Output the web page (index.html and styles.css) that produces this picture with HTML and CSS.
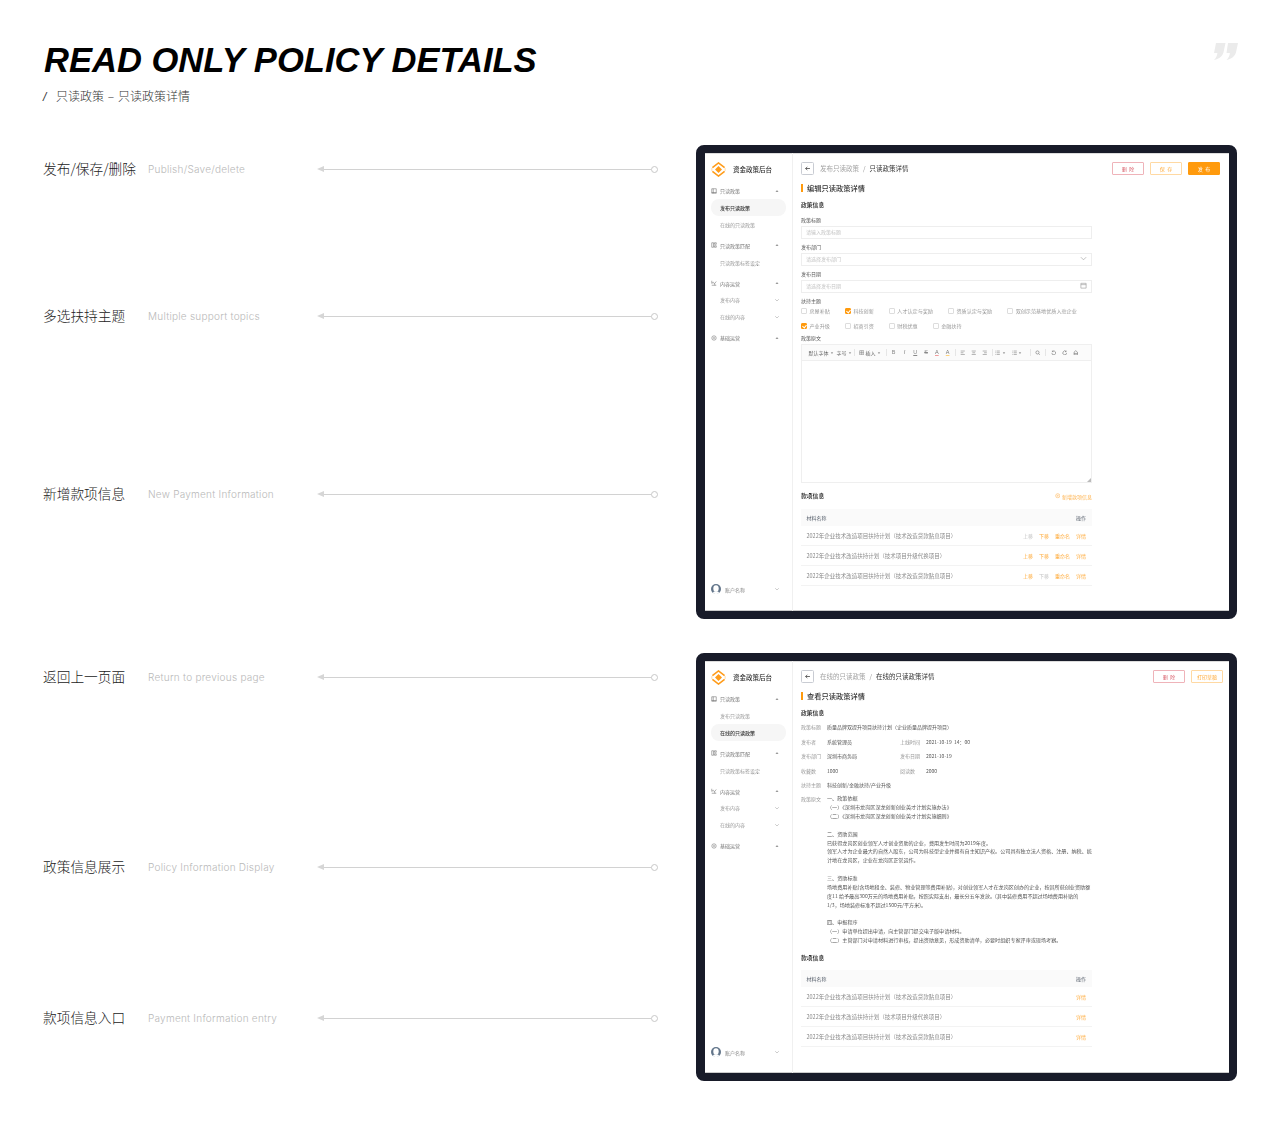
FILE: index.html
```html
<!DOCTYPE html>
<html lang="zh-CN">
<head>
<meta charset="utf-8">
<title>Read only policy details</title>
<link rel="stylesheet" href="styles.css">
</head>
<body>
<svg class="defs" aria-hidden="true">
  <symbol id="logo" viewBox="0 0 16 16">
    <path d="M1.500 6 8 1l6.500 5M1.500 10 8 15l6.500-5" fill="none" stroke="#ff9c1a" stroke-width="1.700"/>
    <path d="M.9 6.500v3M15.100 6.500v3" fill="none" stroke="#ffd9a3" stroke-width="1"/>
    <path d="M8 4.300 11.700 8 8 11.700 4.300 8z" fill="#ff9c1a"/>
  </symbol>
  <symbol id="avatar" viewBox="0 0 10 10">
    <circle cx="5" cy="5" r="5" fill="#62758a"/>
    <ellipse cx="5" cy="4.600" rx="2.700" ry="3.300" fill="#fff"/>
    <path d="M1.500 9.200 3 7.600h4l1.500 1.600L5 10.200z" fill="#fff"/>
  </symbol>
  <symbol id="i-book" viewBox="0 0 8 8"><path d="M1 1h6v6H1zM3 1v6M1 6h6" fill="none" stroke="#777" stroke-width=".8"/></symbol>
  <symbol id="i-grid" viewBox="0 0 8 8"><path d="M1 1h2.400v6H1zM4.600 1H7v2H4.600zM4.600 5H7v2H4.600z" fill="none" stroke="#777" stroke-width=".8"/></symbol>
  <symbol id="i-edit" viewBox="0 0 8 8"><path d="M1 1v3.500L3 3l1.500 2L7 2M1 7h6M5 7V5" fill="none" stroke="#777" stroke-width=".8"/></symbol>
  <symbol id="i-gear" viewBox="0 0 8 8"><circle cx="4" cy="4" r="2.900" fill="none" stroke="#777" stroke-width=".8"/><circle cx="4" cy="4" r="1" fill="#777"/></symbol>
  <symbol id="i-up" viewBox="0 0 6 6"><path d="M1.500 3.800 3 2.200l1.500 1.600z" fill="#777"/></symbol>
  <symbol id="i-down" viewBox="0 0 6 6"><path d="M1.200 2.200 3 4l1.800-1.800" fill="none" stroke="#aaa" stroke-width=".6"/></symbol>
  <symbol id="i-caret" viewBox="0 0 4 4"><path d="M.8 1.400h2.400L2 2.800z" fill="#666"/></symbol>
  <symbol id="i-back" viewBox="0 0 8 8"><path d="M6.800 4H1.800M3.800 2.200 1.800 4l2 1.800" fill="none" stroke="#444" stroke-width=".9"/></symbol>
  <symbol id="i-chev" viewBox="0 0 8 8"><path d="M1 2.500 4 5.500l3-3" fill="none" stroke="#999" stroke-width=".7"/></symbol>
  <symbol id="i-cal" viewBox="0 0 8 8"><path d="M1 1.500h6V7H1zM1 3h6" fill="none" stroke="#999" stroke-width=".7"/></symbol>
  <symbol id="i-table" viewBox="0 0 8 8"><path d="M1 1h6v6H1zM1 4h6M4 1v6" fill="none" stroke="#666" stroke-width=".7"/></symbol>
  <symbol id="i-left" viewBox="0 0 8 8"><path d="M1 1.500h6M1 4h4M1 6.500h6" fill="none" stroke="#666" stroke-width=".7"/></symbol>
  <symbol id="i-center" viewBox="0 0 8 8"><path d="M1 1.500h6M2 4h4M1 6.500h6" fill="none" stroke="#666" stroke-width=".7"/></symbol>
  <symbol id="i-right" viewBox="0 0 8 8"><path d="M1 1.500h6M3 4h4M1 6.500h6" fill="none" stroke="#666" stroke-width=".7"/></symbol>
  <symbol id="i-list" viewBox="0 0 8 8"><path d="M2.500 1.500H7M2.500 4H7M2.500 6.500H7M1 1v1M1 3.500v1M1 6v1" fill="none" stroke="#666" stroke-width=".7"/></symbol>
  <symbol id="i-search" viewBox="0 0 8 8"><circle cx="3.600" cy="3.600" r="2.300" fill="none" stroke="#666" stroke-width=".8"/><path d="M5.300 5.300 7 7" stroke="#666" stroke-width=".8"/></symbol>
  <symbol id="i-undo" viewBox="0 0 8 8"><path d="M2 2.200a2.800 2.800 0 1 1-.8 2M2 .8v1.600h1.600" fill="none" stroke="#666" stroke-width=".8"/></symbol>
  <symbol id="i-redo" viewBox="0 0 8 8"><path d="M6 2.200a2.800 2.800 0 1 0 .8 2M6 .8v1.600H4.400" fill="none" stroke="#666" stroke-width=".8"/></symbol>
  <symbol id="i-trash" viewBox="0 0 8 8"><path d="M1.500 7V3.200L4 1l2.500 2.200V7zM1.500 5h5" fill="none" stroke="#666" stroke-width=".8"/></symbol>
  <symbol id="i-plus" viewBox="0 0 8 8"><circle cx="4" cy="4" r="3" fill="none" stroke="#ffb24d" stroke-width=".8"/><path d="M2.500 4h3M4 2.500v3" stroke="#ffb24d" stroke-width=".6"/></symbol>
</svg>

<div class="page">
  <header class="hero">
    <div>
      <h1 class="hero-title">READ ONLY POLICY DETAILS</h1>
      <p class="crumbs"><span class="crumbs-slash">/</span>只读政策<span class="crumbs-dash">–</span>只读政策详情</p>
    </div>
    <svg class="quote" viewBox="0 0 25 17" aria-hidden="true">
      <path d="M3 0h9.500l-1.800 8.500C10 12.500 6.500 16 1 17c2-2 3.200-4.200 3.400-7H1zM15 0h10l-1.800 8.500c-.8 4-4.200 7.500-9.700 8.500 2-2 3.200-4.200 3.400-7h-3.400z" fill="#ebebeb"/>
    </svg>
  </header>

  <div class="board">
    <div class="notes">
      <div class="note"><span class="note-cn">发布/保存/删除</span><span class="note-en">Publish/Save/delete</span><span class="link"><i class="link-arrow"></i><i class="link-line"></i><i class="link-dot"></i></span></div>
      <div class="note"><span class="note-cn">多选扶持主题</span><span class="note-en">Multiple support topics</span><span class="link"><i class="link-arrow"></i><i class="link-line"></i><i class="link-dot"></i></span></div>
      <div class="note"><span class="note-cn">新增款项信息</span><span class="note-en">New Payment Information</span><span class="link"><i class="link-arrow"></i><i class="link-line"></i><i class="link-dot"></i></span></div>
      <div class="note"><span class="note-cn">返回上一页面</span><span class="note-en">Return to previous page</span><span class="link"><i class="link-arrow"></i><i class="link-line"></i><i class="link-dot"></i></span></div>
      <div class="note"><span class="note-cn">政策信息展示</span><span class="note-en">Policy Information Display</span><span class="link"><i class="link-arrow"></i><i class="link-line"></i><i class="link-dot"></i></span></div>
      <div class="note"><span class="note-cn">款项信息入口</span><span class="note-en">Payment Information entry</span><span class="link"><i class="link-arrow"></i><i class="link-line"></i><i class="link-dot"></i></span></div>
    </div>

    <div class="shots">
      <!-- edit window -->
      <section class="device device-edit">
        <aside class="side">
          <div class="brand"><svg class="brand-logo"><use href="#logo"/></svg><span>资金政策后台</span></div>
          <nav class="nav">
            <div class="nav-head"><svg class="nav-ico"><use href="#i-book"/></svg><span>只读政策</span><svg class="nav-caret"><use href="#i-up"/></svg></div>
            <div class="nav-item nav-item-on">发布只读政策</div>
            <div class="nav-item">在线的只读政策</div>
            <div class="nav-head nav-gap"><svg class="nav-ico"><use href="#i-grid"/></svg><span>只读政策匹配</span><svg class="nav-caret"><use href="#i-up"/></svg></div>
            <div class="nav-item">只读政策标签设定</div>
            <div class="nav-head nav-gap"><svg class="nav-ico"><use href="#i-edit"/></svg><span>内容运营</span><svg class="nav-caret"><use href="#i-up"/></svg></div>
            <div class="nav-item">发布内容<svg class="nav-caret"><use href="#i-down"/></svg></div>
            <div class="nav-item">在线的内容<svg class="nav-caret"><use href="#i-down"/></svg></div>
            <div class="nav-head nav-gap"><svg class="nav-ico"><use href="#i-gear"/></svg><span>基础运营</span><svg class="nav-caret"><use href="#i-up"/></svg></div>
          </nav>
          <div class="account"><svg class="avatar"><use href="#avatar"/></svg><span>账户名称</span><svg class="nav-caret"><use href="#i-down"/></svg></div>
        </aside>
        <main class="main">
          <div class="topbar topbar-edit">
            <div class="path"><span class="back"><svg class="back-ico"><use href="#i-back"/></svg></span><span class="path-dim">发布只读政策</span><span class="path-sep">/</span><span class="path-now">只读政策详情</span></div>
            <div class="actions"><span class="btn btn-red">删 除</span><span class="btn btn-line">保 存</span><span class="btn btn-fill">发 布</span></div>
          </div>
          <h2 class="heading">编辑只读政策详情</h2>
          <h3 class="section">政策信息</h3>
          <div class="form">
            <div class="field"><div class="label">政策标题</div><div class="input">请输入政策标题</div></div>
            <div class="field"><div class="label">发布部门</div><div class="input">请选择发布部门<svg class="input-ico"><use href="#i-chev"/></svg></div></div>
            <div class="field"><div class="label">发布日期</div><div class="input">请选择发布日期<svg class="input-ico"><use href="#i-cal"/></svg></div></div>
            <div class="label">扶持主题</div>
            <div class="checks">
              <span class="check"><i class="box"></i>房屋补贴</span>
              <span class="check"><i class="box box-on"></i>科技创新</span>
              <span class="check"><i class="box"></i>人才认定与奖励</span>
              <span class="check"><i class="box"></i>资质认定与奖励</span>
              <span class="check"><i class="box"></i>双创示范基地优质入驻企业</span>
            </div>
            <div class="checks checks-2">
              <span class="check"><i class="box box-on"></i>产业升级</span>
              <span class="check"><i class="box"></i>招商引资</span>
              <span class="check"><i class="box"></i>财税优惠</span>
              <span class="check"><i class="box"></i>金融扶持</span>
            </div>
            <div class="label label-editor">政策原文</div>
            <div class="editor">
              <div class="toolbar">
                <span class="tool tool-font">默认字体<svg class="tool-caret"><use href="#i-caret"/></svg></span>
                <span class="tool tool-size">字号<svg class="tool-caret"><use href="#i-caret"/></svg></span>
                <i class="tool-div"></i>
                <span class="tool tool-insert"><svg class="tool-ico"><use href="#i-table"/></svg>插入<svg class="tool-caret"><use href="#i-caret"/></svg></span>
                <i class="tool-div"></i>
                <span class="fmt">B</span><span class="fmt fmt-i">I</span><span class="fmt fmt-u">U</span><span class="fmt fmt-s">S</span><span class="fmt fmt-red">A</span><span class="fmt fmt-yel">A</span>
                <i class="tool-div"></i>
                <svg class="tool-ico tool-cell"><use href="#i-left"/></svg><svg class="tool-ico tool-cell"><use href="#i-center"/></svg><svg class="tool-ico tool-cell"><use href="#i-right"/></svg>
                <i class="tool-div"></i>
                <span class="tool tool-list"><svg class="tool-ico"><use href="#i-list"/></svg><svg class="tool-caret"><use href="#i-caret"/></svg></span>
                <span class="tool tool-list"><svg class="tool-ico"><use href="#i-list"/></svg><svg class="tool-caret"><use href="#i-caret"/></svg></span>
                <i class="tool-div"></i>
                <svg class="tool-ico tool-cell"><use href="#i-search"/></svg>
                <i class="tool-div"></i>
                <svg class="tool-ico tool-cell"><use href="#i-undo"/></svg><svg class="tool-ico tool-cell"><use href="#i-redo"/></svg><svg class="tool-ico tool-cell"><use href="#i-trash"/></svg>
              </div>
              <div class="editor-body"><i class="grip"></i></div>
            </div>
            <div class="section-row"><h3 class="section section-flat">款项信息</h3><span class="add"><svg class="add-ico"><use href="#i-plus"/></svg>新增款项信息</span></div>
            <div class="table">
              <div class="thead"><span>材料名称</span><span>操作</span></div>
              <div class="trow"><span class="trow-name">2022年企业技术改造项目扶持计划（技术改造贷款贴息项目）</span><span class="ops"><a class="op op-off">上移</a><a class="op">下移</a><a class="op">重命名</a><a class="op">详情</a></span></div>
              <div class="trow"><span class="trow-name">2022年企业技术改造扶持计划（技术项目升级代换项目）</span><span class="ops"><a class="op">上移</a><a class="op">下移</a><a class="op">重命名</a><a class="op">详情</a></span></div>
              <div class="trow"><span class="trow-name">2022年企业技术改造项目扶持计划（技术改造贷款贴息项目）</span><span class="ops"><a class="op">上移</a><a class="op op-off">下移</a><a class="op">重命名</a><a class="op">详情</a></span></div>
            </div>
          </div>
        </main>
      </section>

      <!-- view window -->
      <section class="device device-view">
        <aside class="side">
          <div class="brand"><svg class="brand-logo"><use href="#logo"/></svg><span>资金政策后台</span></div>
          <nav class="nav">
            <div class="nav-head"><svg class="nav-ico"><use href="#i-book"/></svg><span>只读政策</span><svg class="nav-caret"><use href="#i-up"/></svg></div>
            <div class="nav-item">发布只读政策</div>
            <div class="nav-item nav-item-on">在线的只读政策</div>
            <div class="nav-head nav-gap"><svg class="nav-ico"><use href="#i-grid"/></svg><span>只读政策匹配</span><svg class="nav-caret"><use href="#i-up"/></svg></div>
            <div class="nav-item">只读政策标签设定</div>
            <div class="nav-head nav-gap"><svg class="nav-ico"><use href="#i-edit"/></svg><span>内容运营</span><svg class="nav-caret"><use href="#i-up"/></svg></div>
            <div class="nav-item">发布内容<svg class="nav-caret"><use href="#i-down"/></svg></div>
            <div class="nav-item">在线的内容<svg class="nav-caret"><use href="#i-down"/></svg></div>
            <div class="nav-head nav-gap"><svg class="nav-ico"><use href="#i-gear"/></svg><span>基础运营</span><svg class="nav-caret"><use href="#i-up"/></svg></div>
          </nav>
          <div class="account"><svg class="avatar"><use href="#avatar"/></svg><span>账户名称</span><svg class="nav-caret"><use href="#i-down"/></svg></div>
        </aside>
        <main class="main">
          <div class="topbar topbar-view">
            <div class="path"><span class="back"><svg class="back-ico"><use href="#i-back"/></svg></span><span class="path-dim">在线的只读政策</span><span class="path-sep">/</span><span class="path-now">在线的只读政策详情</span></div>
            <div class="actions"><span class="btn btn-red">删 除</span><span class="btn btn-line">打印草稿</span></div>
          </div>
          <h2 class="heading">查看只读政策详情</h2>
          <h3 class="section">政策信息</h3>
          <div class="info">
            <div class="info-row"><span class="info-key">政策标题</span><span>质量品牌双提升项目扶持计划（企业质量品牌提升项目）</span></div>
            <div class="info-row"><span class="info-key">发布者</span><span class="info-val">系统管理员</span><span class="info-key">上线时间</span><span>2021-10-19&nbsp;&nbsp;14：00</span></div>
            <div class="info-row"><span class="info-key">发布部门</span><span class="info-val">深圳市商务局</span><span class="info-key">发布日期</span><span>2021-10-19</span></div>
            <div class="info-row"><span class="info-key">收藏数</span><span class="info-val">1000</span><span class="info-key">阅读数</span><span>2000</span></div>
            <div class="info-row"><span class="info-key">扶持主题</span><span>科技创新/金融扶持/产业升级</span></div>
            <div class="info-row info-row-body">
              <span class="info-key">政策原文</span>
              <div class="doc">
                <p>一、政策依据</p>
                <p>（一）《深圳市龙岗区深龙创新创业英才计划实施办法》</p>
                <p class="doc-end">（二）《深圳市龙岗区深龙创新创业英才计划实施细则》</p>
                <p>二、资助范围</p>
                <p>已获得龙岗区创业领军人才创业资助的企业，费用发生时间为2019年度。</p>
                <p>领军人才为企业最大的自然人股东，公司为科技型企业并拥有自主知识产权。公司具有独立法人资格、注册、纳税、统</p>
                <p class="doc-end">计地在龙岗区，企业在龙岗区正常运作。</p>
                <p>三、资助标准</p>
                <p>场地费用补贴(含场地租金、装修、物业管理等费用补贴)，对创业领军人才在龙岗区创办的企业，按其所获创业资助额</p>
                <p>度11 给予最高300万元的场地费用补贴，按照实际支出，最长分五年发放。(其中装修费用不超过场地费用补贴的</p>
                <p class="doc-end">1/3，场地装修标准不超过1500元/平方米)。</p>
                <p>四、申报程序</p>
                <p>（一）申请单位提出申请，向主管部门提交电子版申请材料。</p>
                <p>（二）主管部门对申请材料进行审核，提出资助意见，形成资助清单，必要时组织专家评审或现场考察。</p>
              </div>
            </div>
          </div>
          <div class="section-row section-row-view"><h3 class="section section-flat">款项信息</h3></div>
          <div class="table table-view">
            <div class="thead"><span>材料名称</span><span>操作</span></div>
            <div class="trow"><span class="trow-name">2022年企业技术改造项目扶持计划（技术改造贷款贴息项目）</span><span class="ops"><a class="op">详情</a></span></div>
            <div class="trow"><span class="trow-name">2022年企业技术改造扶持计划（技术项目升级代换项目）</span><span class="ops"><a class="op">详情</a></span></div>
            <div class="trow"><span class="trow-name">2022年企业技术改造项目扶持计划（技术改造贷款贴息项目）</span><span class="ops"><a class="op">详情</a></span></div>
          </div>
        </main>
      </section>
    </div>
  </div>
</div>
</body>
</html>
```

FILE: styles.css
```css
* { box-sizing: border-box; }
html, body { margin: 0; padding: 0; background: #fff; }
body { font-family: "Noto Sans CJK SC", "Liberation Sans", sans-serif; color: #333; }
.defs { position: absolute; width: 0; height: 0; overflow: hidden; }
h1, h2, h3, p { margin: 0; }

.page { width: 1280px; height: 1124px; padding: 0 43px; overflow: hidden; }

/* header */
.hero { display: flex; justify-content: space-between; align-items: flex-start; height: 145px; padding-top: 38px; }
.hero-title { font: italic bold 34.550px/44px "Liberation Sans", Arial, sans-serif; color: #000; margin-left: 1px; white-space: nowrap; }
.crumbs { margin-top: 4px; font-size: 12px; line-height: 20px; font-weight: 300; color: #333; white-space: nowrap; }
.crumbs-slash { display: inline-block; width: 13px; font-family: "Liberation Sans", sans-serif; font-style: italic; }
.crumbs-dash { display: inline-block; width: 14px; text-align: center; }
.quote { width: 25px; height: 17px; margin-top: 5px; margin-right: -1px; }

/* board */
.board { display: flex; justify-content: space-between; align-items: flex-start; }
.notes { width: 615px; padding-top: 13px; display: grid; grid-template-rows: 147px 178px 183px 190px 151px 20px; }
.note { display: grid; grid-template-columns: 105px 169px 341px; align-items: center; height: 20px; white-space: nowrap; }
.note-cn { font-size: 13.700px; line-height: 18px; height: 20px; font-weight: 300; color: #222; }
.note-en { font: 300 10px/22px Inter, "Liberation Sans", sans-serif; letter-spacing: .25px; color: #b9b9b9; }
.link { display: flex; align-items: center; height: 7px; }
.link-arrow { width: 0; height: 0; border: 3.500px solid transparent; border-left: 0; border-right: 7px solid #d6d6d6; }
.link-line { flex: 1; height: 1px; background: #d2d2d2; }
.link-dot { width: 7px; height: 7px; border: 1px solid #c8c8c8; border-radius: 50%; }

/* devices */
.shots { width: 541px; display: flex; flex-direction: column; gap: 34px; }
.device { display: flex; background: #fff; border: 8px solid #181b29; border-left-width: 9px; border-radius: 8px; box-shadow: inset 0 1px 0 #ddd, inset 0 -1px 0 #ccc; overflow: hidden; font-size: 5px; line-height: 7px; filter: blur(.3px); }
.device-edit { height: 474px; }
.device-view { height: 428px; }

/* sidebar */
.side { width: 88px; flex: none; display: flex; flex-direction: column; padding: 8px 6px 17px; border-right: 1px solid #f0f0f0; color: #777; }
.device-view .side { padding-bottom: 16px; }
.brand { display: flex; align-items: center; gap: 7px; height: 16px; font-size: 6.500px; color: #333; font-weight: 500; white-space: nowrap; }
.brand-logo { width: 15px; height: 15px; flex: none; }
.nav { margin-top: 5.500px; }
.nav-head, .nav-item { display: flex; align-items: center; height: 16.700px; white-space: nowrap; }
.nav-head { gap: 3px; }
.nav-gap { margin-top: 4.500px; }
.nav-ico { width: 6px; height: 6px; flex: none; }
.nav-caret { width: 6px; height: 6px; flex: none; margin-left: auto; margin-right: 6px; }
.nav-item { padding-left: 9px; color: #999; }
.nav-item-on { background: #f6f6f6; border-radius: 8px; color: #333; font-weight: 500; }
.account { margin-top: auto; display: flex; align-items: center; gap: 4px; height: 10px; color: #888; white-space: nowrap; }
.avatar { width: 10px; height: 10px; flex: none; }

/* main */
.main { flex: 1; min-width: 0; padding-left: 8px; color: #666; }
.topbar { display: flex; justify-content: space-between; align-items: center; height: 31px; }
.topbar-edit { padding-right: 9px; }
.topbar-view { padding-right: 6px; }
.path { display: flex; align-items: center; font-size: 6.500px; white-space: nowrap; }
.back { display: flex; align-items: center; justify-content: center; width: 13px; height: 13px; border: 1px solid #c9ccd3; border-radius: 1.500px; margin-right: 6px; }
.back-ico { width: 7px; height: 7px; }
.path-dim { color: #a3a3a3; }
.path-sep { margin: 0 4px; color: #999; }
.path-now { color: #333; }
.actions { display: flex; gap: 6px; }
.btn { display: flex; align-items: center; justify-content: center; width: 32px; height: 13.500px; border: 1px solid; border-radius: 1px; white-space: nowrap; }
.btn-red { border-color: #efb3b9; color: #d9606c; word-spacing: 1.500px; }
.btn-line { border-color: #ffd9a3; color: #ffac3d; word-spacing: 1.500px; }
.btn-fill { background: #ff9a0d; border-color: #ff9a0d; color: #fff; word-spacing: 1.500px; }
.heading { height: 8px; border-left: 2px solid #ff9a0d; padding-left: 4px; font-size: 7.250px; line-height: 8px; font-weight: 500; color: #333; white-space: nowrap; }
.section { margin-top: 9px; height: 8px; font-size: 5.800px; line-height: 8px; font-weight: 500; color: #222; white-space: nowrap; }
.section-flat { margin-top: 0; }

/* form */
.form { width: 291px; padding-top: 7.500px; }
.field { margin-bottom: 5px; }
.label { height: 7px; line-height: 6px; color: #555; white-space: nowrap; }
.input { display: flex; align-items: center; justify-content: space-between; height: 12.500px; margin-top: 2.500px; padding: 0 4px 1px; border: 1px solid #eee; color: #c4c4c4; white-space: nowrap; }
.input-ico { width: 7px; height: 7px; }
.checks { display: flex; margin-top: 3px; height: 7px; }
.checks-2 { margin-top: 8px; }
.check { display: flex; align-items: center; min-width: 43.500px; padding-right: 15px; font-size: 5.100px; line-height: 6px; color: #999; white-space: nowrap; }
.box { position: relative; width: 6px; height: 6px; margin-right: 2.500px; border: 1px solid #ddd; border-radius: 1px; background: #fff; flex: none; }
.box-on { background: #ff9a0d; border-color: #ff9a0d; }
.box-on::after { content: ""; position: absolute; left: .8px; top: .2px; width: 2px; height: 3px; border: solid #fff; border-width: 0 .7px .7px 0; transform: rotate(40deg); }
.label-editor { margin-top: 5px; }
.editor { width: 291px; height: 139px; margin-top: 2.500px; border: 1px solid #efefef; display: flex; flex-direction: column; }
.toolbar { display: flex; align-items: center; height: 16px; flex: none; padding-left: 6.500px; background: #fbfbfb; border-bottom: 1px solid #efefef; color: #666; white-space: nowrap; }
.tool { display: flex; align-items: center; }
.tool-font { width: 28px; }
.tool-size { width: 16px; }
.tool-insert { width: 25px; gap: 1px; margin-left: 2px; }
.tool-list { width: 16.500px; }
.tool-caret { width: 4px; height: 4px; margin-left: 1px; flex: none; }
.tool-ico { width: 5.500px; height: 5.500px; flex: none; }
.tool-cell { width: 5.500px; margin: 0 2.800px; }
.tool-div { width: 1px; height: 7px; margin: 0 1.700px; background: #e6e6e6; flex: none; }
.fmt { width: 10.800px; text-align: center; font: 5.500px/7px "Liberation Sans", sans-serif; color: #888; }
.fmt-i { font-style: italic; }
.fmt-u { text-decoration: underline; }
.fmt-s { text-decoration: line-through; }
.fmt-red { color: #777; text-decoration: underline; text-decoration-color: #f19b9b; }
.fmt-yel { color: #777; text-decoration: underline; text-decoration-color: #ffd27a; }
.editor-body { position: relative; flex: 1; }
.grip { position: absolute; right: 0; bottom: 0; width: 0; height: 0; border-left: 4px solid transparent; border-bottom: 4px solid #bbb; }

.section-row { display: flex; justify-content: space-between; align-items: center; width: 291px; margin-top: 9px; height: 8px; }
.section-row-view { margin-top: 9.500px; }
.add { display: flex; align-items: center; gap: 1.500px; color: #ffb24d; white-space: nowrap; }
.add-ico { width: 5.500px; height: 5.500px; }

/* table */
.table { width: 291px; margin-top: 9px; }
.table-view { margin-top: 8px; }
.thead, .trow { display: flex; justify-content: space-between; align-items: center; padding: 0 6px 0 5.500px; white-space: nowrap; }
.thead { height: 17px; background: #fafafa; color: #5c6470; }
.trow { height: 20px; border-bottom: 1px solid #f3f3f3; color: #8a8a8a; }
.trow-name { font-size: 5.500px; padding-top: 1px; }
.ops { display: flex; gap: 6px; }
.op { color: #ffae42; }
.op-off { color: #c6c6c6; }

/* info */
.info { padding-top: 6px; width: 291px; }
.info-row { display: flex; min-height: 7px; margin-bottom: 7.400px; color: #555; white-space: nowrap; }
.info-row:first-child { margin-bottom: 7.900px; }
.info-key { width: 26px; flex: none; color: #999; }
.info-val { width: 73px; flex: none; }
.info-row-body { margin-bottom: 0; }
.doc { font-size: 5.100px; line-height: 8.900px; margin-top: -1px; color: #555; }
.doc-end { margin-bottom: 8.500px; }
.doc-end:last-child { margin-bottom: 0; }
```
